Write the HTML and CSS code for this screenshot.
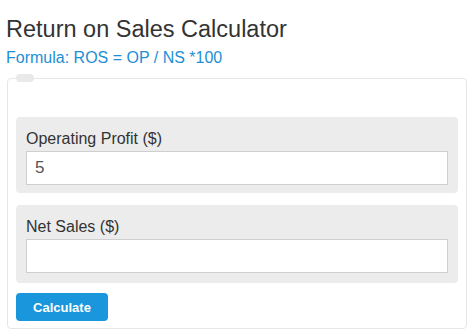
FILE: index.html
```html
<!DOCTYPE html>
<html lang="en">
<head>
    <meta charset="UTF-8">
    <meta name="viewport" content="width=device-width, initial-scale=1.0">
    <title>Return on Sales Calculator</title>
    <link rel="stylesheet" href="styles.css">
</head>
<body>

    <div class="page">
        <h1>Return on Sales Calculator</h1>
        <div class="formula">Formula: ROS = OP / NS *100</div>

        <fieldset class="calc">
            <legend></legend>

            <div class="input-group">
                <label for="profit">Operating Profit ($)</label>
                <input type="text" id="profit" value="5">
            </div>

            <div class="input-group">
                <label for="sales">Net Sales ($)</label>
                <input type="text" id="sales">
            </div>

            <button type="button">Calculate</button>
        </fieldset>
    </div>

</body>
</html>
```

FILE: styles.css
```css
/* General Styles */
body {
    font-family: 'Liberation Sans', Arial, sans-serif;
    background: #ffffff;
    margin: 0;
    padding: 0;
    color: #333;
}

.page {
    padding: 13px 7px 0 6px;
}

h1 {
    font-size: 23.5px;
    font-weight: normal;
    color: #333;
    margin: 0;
    line-height: 32px;
}

.formula {
    color: #1d8fd4;
    font-size: 16px;
    line-height: 20px;
    margin-top: 3px;
}

/* Calculator box */
.calc {
    border: 1px solid #e6e6e6;
    border-radius: 4px;
    margin: 10px 0 0 1px;
    padding: 38px 8px 7px 8px;
    position: relative;
}

.calc legend {
    position: absolute;
    top: -5px;
    left: 8px;
    width: 18px;
    height: 8px;
    padding: 0;
    background: #e9e9e9;
    border-radius: 4px;
}

.input-group {
    background: #ececec;
    border-radius: 4px;
    padding: 10px 10px 8px 10px;
    margin-bottom: 12px;
}

.input-group + .input-group {
    padding-bottom: 10px;
    margin-bottom: 10px;
}

.input-group label {
    display: block;
    font-size: 16px;
    line-height: 24px;
    color: #333;
}

.input-group input {
    display: block;
    box-sizing: border-box;
    width: 100%;
    height: 34px;
    margin-top: 0;
    padding: 4px 8px;
    font-family: inherit;
    font-size: 17px;
    color: #555;
    background: #fff;
    border: 1px solid #cfcfcf;
    border-radius: 0;
}

button {
    display: block;
    width: 92px;
    height: 28px;
    font-family: inherit;
    font-size: 13px;
    font-weight: bold;
    color: #fff;
    background: #1a96dc;
    border: none;
    border-radius: 4px;
    cursor: pointer;
}
```
